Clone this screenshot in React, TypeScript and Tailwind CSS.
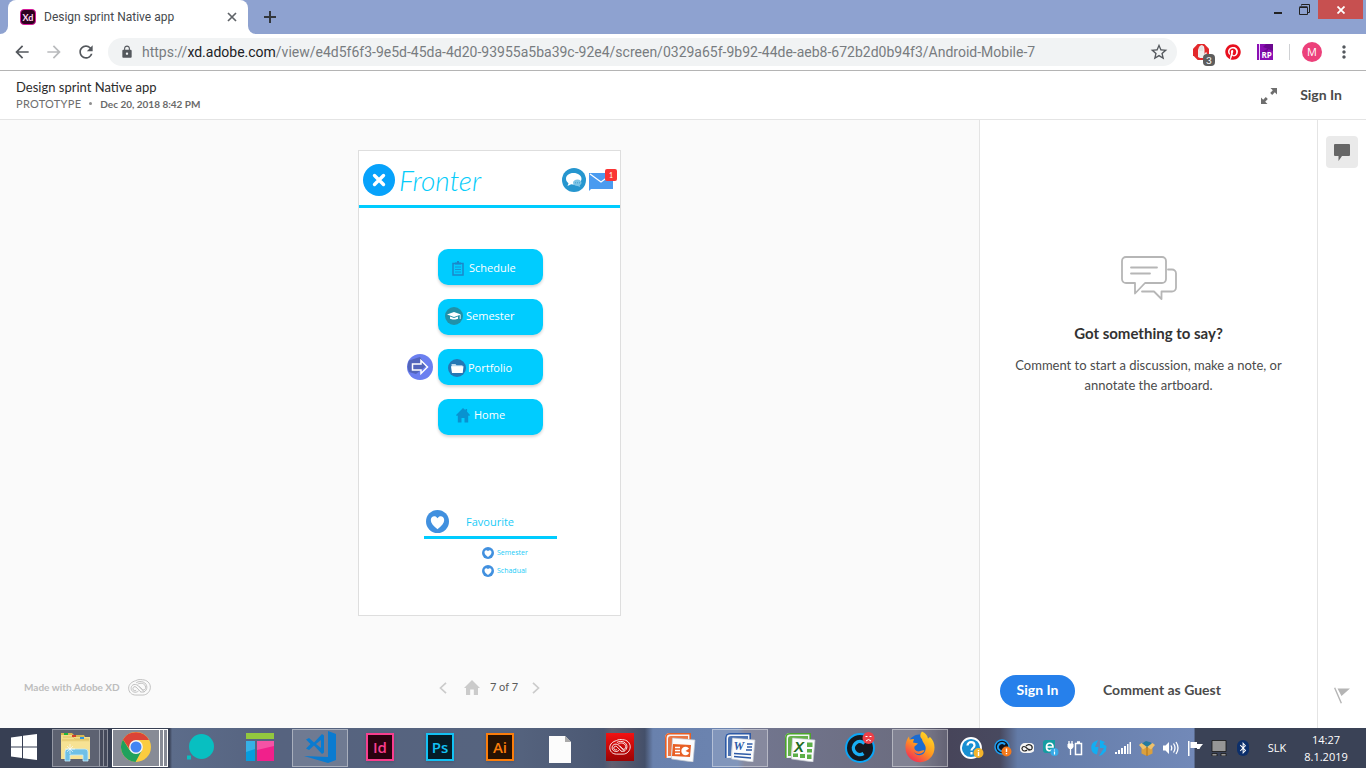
import React from "react";
import { FaPinterest, FaBluetoothB } from "react-icons/fa";
import { MdArrowBack, MdArrowForward, MdRefresh, MdLock, MdStarBorder, MdMoreVert } from "react-icons/md";

type IconProps = { className?: string };

const XdMark = () => (
  <span className="flex size-4 shrink-0 items-center justify-center rounded-sm border border-[#d8199b] bg-[#2e001e] text-[9px] leading-none font-bold text-[#ffd9f2]">
    Xd
  </span>
);

function TitleBar() {
  return (
    <div className="flex h-[34px] items-start bg-[#8ea2d0]">
      <div className="flex h-full w-2 items-end bg-white">
        <div className="h-full w-full rounded-br-lg bg-[#8ea2d0]" />
      </div>
      <div className="flex h-full w-60 items-center rounded-t-lg bg-white pr-2 pl-3">
        <XdMark />
        <span className="ml-2 flex-1 truncate font-[Roboto] text-[12px] text-[#45494d]">Design sprint Native app</span>
        <button aria-label="Close tab" className="flex size-4 items-center justify-center">
          <svg viewBox="0 0 10 10" className="size-[10px]" stroke="#5f6368" strokeWidth="1.7">
            <path d="M1 1l8 8M9 1l-8 8" />
          </svg>
        </button>
      </div>
      <div className="h-full w-2 bg-white">
        <div className="h-full w-full rounded-bl-lg bg-[#8ea2d0]" />
      </div>
      <button aria-label="New tab" className="flex h-[34px] w-7 items-center justify-center">
        <svg viewBox="0 0 12 12" className="size-3" stroke="#33373c" strokeWidth="2">
          <path d="M6 0v12M0 6h12" />
        </svg>
      </button>
      <div className="ml-auto flex items-start">
        <button aria-label="Minimize" className="flex h-[19px] w-6 items-center justify-center">
          <svg viewBox="0 0 8 12" className="h-3 w-2">
            <path d="M0 8h8v2H0z" fill="#222" />
          </svg>
        </button>
        <button aria-label="Restore" className="flex h-[19px] w-7 items-center justify-center">
          <svg viewBox="0 0 11 11" className="size-[11px]" fill="none" stroke="#222">
            <path d="M2.500 1.500v-1h8v8h-1.500" />
            <path d="M.5 3.500h8v7h-8z" />
            <path d="M.5 3h8" strokeWidth="1.500" />
          </svg>
        </button>
        <button aria-label="Close window" className="mr-[3px] flex h-[19px] w-[45px] items-center justify-center bg-[#c75050]">
          <svg viewBox="0 0 8 8" className="size-2" stroke="#fff" strokeWidth="1.8">
            <path d="M.5.5l7 7M7.500.5l-7 7" />
          </svg>
        </button>
      </div>
    </div>
  );
}

function Toolbar() {
  return (
    <div className="flex h-[37px] items-center border-b border-[#b4b4b4] bg-white px-3">
      <button aria-label="Back"><MdArrowBack className="size-5 text-[#54585d]" /></button>
      <button aria-label="Forward" className="ml-3"><MdArrowForward className="size-5 text-[#b9bbbd]" /></button>
      <button aria-label="Reload" className="ml-3"><MdRefresh className="size-5 text-[#54585d]" /></button>
      <div className="ml-3 flex h-7 min-w-0 flex-1 items-center rounded-full bg-[#f1f3f4] pr-2 pl-3">
        <MdLock className="size-[14px] shrink-0 text-[#54585d]" />
        <a href="#" className="ml-2 flex-1 truncate font-[Roboto] text-[14px] text-[#787c80]">
          https://<span className="text-[#202124]">xd.adobe.com</span>/view/e4d5f6f3-9e5d-45da-4d20-93955a5ba39c-92e4/screen/0329a65f-9b92-44de-aeb8-672b2d0b94f3/Android-Mobile-7
        </a>
        <button aria-label="Bookmark"><MdStarBorder className="size-5 text-[#54585d]" /></button>
      </div>
      <button aria-label="Ad blocker" className="relative ml-4 size-4">
        <svg viewBox="0 0 16 16" className="size-4">
          <path d="M4.700 0h6.600L16 4.700v6.600L11.300 16H4.700L0 11.300V4.700z" fill="#e3282b" />
          <path d="M5 13V6l1-3 1.500-1.500L9 1l2 1.500.5 3V10l1.500-2 1 1-3 5H7z" fill="#f0eeee" />
          <path d="M7 7V2.500M9 7V2" stroke="#cfc6c6" strokeWidth=".6" />
        </svg>
        <span className="absolute top-[10px] left-[10px] flex h-3 w-3 items-center justify-center rounded-sm bg-[#5d5d5d] text-[10px] leading-none text-white">3</span>
      </button>
      <button aria-label="Pinterest" className="ml-4"><FaPinterest className="size-4 text-[#e8101f]" /></button>
      <button aria-label="RP extension" className="ml-4">
        <svg viewBox="0 0 16 16" className="size-4">
          <path d="M0 0h16v16H0z" fill="#8a0fb3" />
          <path d="M16 0v7L6 3 9 0zM3 9l9-5-4 7z" fill="#6b078f" />
          <path d="M2.500 0v16" stroke="#f3d8ff" />
          <text x="4.500" y="14" fontSize="8" fontWeight="700" fill="#fff" fontFamily="Open Sans, sans-serif">RP</text>
        </svg>
      </button>
      <div className="ml-4 h-4 w-px bg-[#cfd1d4]" />
      <button aria-label="Profile" className="ml-3 flex size-5 items-center justify-center rounded-full bg-[#ec407a] font-[Open_Sans] text-[11px] text-white">M</button>
      <button aria-label="Menu" className="ml-3"><MdMoreVert className="size-5 text-[#54585d]" /></button>
    </div>
  );
}

function ProjectHeader() {
  return (
    <header className="flex h-[49px] items-center border-b border-[#e4e4e4] bg-white pr-6 pb-px pl-4">
      <div>
        <h1 className="text-[13px] leading-[18px] text-[#2c2c2c]">Design sprint Native app</h1>
        <p className="flex items-center gap-2 text-[11px] leading-[16px] text-[#6e6e6e]">
          <span className="tracking-wide">PROTOTYPE</span>
          <span className="size-[3px] rounded-full bg-[#8e8e8e]" />
          <span className="text-[10px] font-bold text-[#6a6a6a]">Dec 20, 2018 8:42 PM</span>
        </p>
      </div>
      <button aria-label="Full screen" className="ml-auto pt-0.5">
        <svg viewBox="0 0 16 16" className="size-4" fill="#6e6e6e">
          <path d="M9.500 0H16v6.500l-2.200-2.200-2.600 2.600-2-2 2.600-2.600zM6.500 16H0V9.500l2.200 2.200 2.600-2.600 2 2-2.600 2.600z" />
        </svg>
      </button>
      <a href="#" className="ml-[23px] text-[14px] font-bold text-[#4b4b4b]">Sign In</a>
    </header>
  );
}

const HeartBadge = ({ className }: IconProps) => (
  <svg viewBox="0 0 24 24" className={className}>
    <circle cx="12" cy="12" r="12" fill="#4190df" />
    <path d="M12 20C7.500 16.500 5 14 5 10.500 5 6 10 5 12 8.500 14 5 19 6 19 10.500 19 14 16.500 16.500 12 20z" fill="#fff" />
  </svg>
);

const ScheduleIcon = () => (
  <svg viewBox="0 0 12 15" className="h-[15px] w-3">
    <path d="M1 2.500h10v11.500H1z" fill="none" stroke="#1b87c9" strokeWidth="1.500" />
    <path d="M3 1.500h6v2H3zM5 0h2v2H5z" fill="#1b87c9" />
    <path d="M3 6h6M3 8.500h6M3 11h6" stroke="#1b87c9" strokeWidth=".8" />
  </svg>
);

const SemesterIcon = () => (
  <svg viewBox="0 0 18 18" className="size-[18px]">
    <circle cx="9" cy="9" r="9" fill="#2191a8" />
    <path d="M2 7.500L9 5l7 2.500L9 10z" fill="#fff" />
    <path d="M5 9.500v2.300c2 1 6 1 8 0V9.500L9 11z" fill="#fff" />
    <path d="M15.200 8v4" stroke="#fff" strokeWidth=".8" />
  </svg>
);

const PortfolioIcon = () => (
  <svg viewBox="0 0 18 18" className="size-[18px]">
    <circle cx="9" cy="9" r="9" fill="#2477b5" />
    <path d="M3.500 5h4l1 1.300h6V13H4z" fill="#b9d8ee" />
    <path d="M3 7.300h12.500L14.700 14H4z" fill="#fff" />
  </svg>
);

const HomeIcon = () => (
  <svg viewBox="0 0 14 15" className="h-[15px] w-[14px]" fill="#0992d0">
    <path d="M7 0l2.500 2.300V1h1.600v2.800L14 7l-.8 1-1-.6V14.500H8.500V10h-3v4.500H1.800V7.400l-1 .6-.8-1z" />
  </svg>
);

const menu = [
  { label: "Schedule", icon: <ScheduleIcon />, pad: "pl-[14px] gap-[5px] pt-0.5" },
  { label: "Semester", icon: <SemesterIcon />, pad: "pl-[7px] gap-[3px] pb-0.5" },
  { label: "Portfolio", icon: <PortfolioIcon />, pad: "pl-[10px] gap-0.5 pt-0.5" },
  { label: "Home", icon: <HomeIcon />, pad: "pl-[18px] gap-1 pb-1" },
];

function Artboard() {
  return (
    <section className="flex w-[263px] flex-col border border-[#dedede] bg-white pb-[38px]">
      <div className="flex h-[54px] items-center pt-1 pr-[3px] pl-1">
        <button aria-label="Close menu">
          <svg viewBox="0 0 32 32" className="size-8">
            <circle cx="16" cy="16" r="16" fill="#07a2fb" />
            <path d="M11.500 11.500l9 9M20.500 11.500l-9 9" stroke="#fff" strokeWidth="3.400" strokeLinecap="round" />
          </svg>
        </button>
        <span className="ml-1 font-[Lato] text-[28px] leading-8 font-light text-[#06ccfa] italic">Fronter</span>
        <button aria-label="Chat" className="ml-auto">
          <svg viewBox="0 0 24 24" className="size-6">
            <circle cx="12" cy="12" r="12" fill="#2696cf" />
            <path d="M11.500 5C7 5 4 7.500 4 10.800c0 2 1 3.400 2.500 4.400L5.500 18l3.700-1.800c1 .2 1.600.2 2.600.2 4.200 0 7.700-2.500 7.700-5.700S16 5 11.500 5z" fill="#fff" />
            <path d="M15.500 11.500c-2.500 0-4.500 1.400-4.500 3.200S13 18 15.500 18l2.800 1-.6-1.700c1-.6 1.800-1.500 1.800-2.600 0-1.800-1.500-3.200-4-3.200z" fill="#7cc4e6" />
            <path d="M13 14.800h5" stroke="#3f9fd0" strokeDasharray="1 1" />
          </svg>
        </button>
        <button aria-label="Messages" className="relative mt-1 ml-[3px] pr-1">
          <svg viewBox="0 0 24 18" className="h-[18px] w-6">
            <path d="M0 0h24v16H2l-2 2z" fill="#4a9bf0" />
            <path d="M1 1l11 8L23 1" fill="none" stroke="#fff" strokeWidth="1.200" />
          </svg>
          <span className="absolute -top-1 right-0 flex h-3 w-3 items-center justify-center rounded-[2px] bg-[#fa3434] text-[7px] leading-none text-white">1</span>
        </button>
      </div>
      <div className="h-[3px] bg-[#00ccff]" />
      <div className="mt-[41px] flex flex-col gap-[14px] pl-12">
        {menu.map((m) => (
          <div key={m.label} className="flex items-center">
            <span className="w-[31px]">
              {m.label === "Portfolio" && (
                <svg viewBox="0 0 26 26" className="size-[26px]">
                  <circle cx="13" cy="13" r="13" fill="#6b7ff0" />
                  <path d="M2 6.500L13 3l6 9-10 8-7-2a13 13 0 010-11.500z" fill="#5265bb" />
                  <path d="M5.500 10H14V6.500l6.500 6.500L14 19.500V16H5.500z" fill="none" stroke="#fff" strokeWidth="1.500" />
                </svg>
              )}
            </span>
            <button className={`flex h-9 w-[105px] items-center rounded-[10px] bg-[#00ccff] font-[Open_Sans] text-[11px] text-white shadow-[0_2px_3px_rgba(0,0,0,0.16)] ${m.pad}`}>
              {m.icon}
              {m.label}
            </button>
          </div>
        ))}
      </div>
      <div className="mt-[75px] ml-[65px] w-[133px] font-[Open_Sans] text-[#19cbf7]">
        <div className="flex h-[29px] items-center border-b-[3px] border-[#00ccff] pb-1 pl-0.5">
          <HeartBadge className="size-[23px]" />
          <h2 className="ml-[17px] pt-0.5 text-[11px]">Favourite</h2>
        </div>
        <ul className="mt-2 ml-[58px] flex flex-col gap-[6px] text-[7px] leading-3">
          <li className="flex items-center gap-[3px]"><HeartBadge className="size-3" />Semester</li>
          <li className="flex items-center gap-[3px]"><HeartBadge className="size-3" />Schadual</li>
        </ul>
      </div>
    </section>
  );
}

const CreativeCloud = ({ className }: IconProps) => (
  <svg viewBox="0 0 24 18" className={className} fill="none" stroke="currentColor" strokeWidth="1">
    <path d="M8 1.800C10 .5 13 .3 15 .8c5 0 8.500 3.700 8.500 8s-3.500 8.200-8 8.200H8C3.500 17 .5 13.800.5 9.700S4 2.800 8 1.800z" />
    <path d="M17 13.500l-6.500-6.400C8.500 5.500 6.500 5.400 5 6.300c-2.700 1.800-2.400 6 .5 7.300 2.200 1 4.200.2 5.500-1" />
    <path d="M13.500 13.800L8.300 8.500C7 7.600 5 8.200 5 10.300s2.200 2.800 3.500 1.500M8.500 4C11 2.300 14 2.500 16 3.300c5 2 5 8.700.3 10.500H13" />
    <path d="M10 5.500c3-2 8-1 8.500 3.200.2 2-1.500 3.300-3 2.800l-3.800-3.600" />
  </svg>
);

function Canvas() {
  return (
    <main className="flex min-w-0 flex-1 flex-col items-center bg-[#fafafa] pt-[30px] pb-8">
      <Artboard />
      <div className="mt-auto grid w-full grid-cols-[1fr_auto_1fr] items-center px-6">
        <a href="#" className="flex items-center gap-2 text-[10px] font-bold text-[#bdbdbd]">
          Made with Adobe XD
          <CreativeCloud className="h-[17px] w-[23px]" />
        </a>
        <nav className="flex items-center text-[#cbcbcb]">
          <button aria-label="Previous screen">
            <svg viewBox="0 0 8 12" className="h-3 w-2" fill="none" stroke="currentColor" strokeWidth="1.700"><path d="M7 .8L1.500 6 7 11.200" /></svg>
          </button>
          <button aria-label="First screen" className="ml-[17px]">
            <svg viewBox="0 0 16 15" className="h-[15px] w-4" fill="currentColor"><path d="M8 0l8 8h-2v7H9.800V9.500H6.200V15H2V8H0z" /></svg>
          </button>
          <span className="mr-[14px] ml-[10px] text-[11px] text-[#5b5b5b]">7 of 7</span>
          <button aria-label="Next screen">
            <svg viewBox="0 0 8 12" className="h-3 w-2" fill="none" stroke="currentColor" strokeWidth="1.700"><path d="M1 .8L6.500 6 1 11.200" /></svg>
          </button>
        </nav>
      </div>
    </main>
  );
}

function CommentPanel() {
  return (
    <aside className="flex w-[338px] shrink-0 flex-col border-l border-[#e4e4e4] bg-white px-5 pb-[21px]">
      <div className="flex flex-col items-center pt-[136px] text-center">
        <svg viewBox="0 0 56 45" className="h-[45px] w-14" fill="none" stroke="#b6b6b6" strokeWidth="1.800" strokeLinecap="round" strokeLinejoin="round">
          <path d="M5 1h36a4 4 0 014 4v18a4 4 0 01-4 4H24L14 37.500V27H5a4 4 0 01-4-4V5a4 4 0 014-4zM10 11.500h26M10 17.500h19" />
          <path d="M47 13.500h4a4 4 0 014 4v14a4 4 0 01-4 4H40.500V43L33 35.500H21" />
        </svg>
        <h2 className="mt-[22px] text-[15px] leading-5 font-bold text-[#323232]">Got something to say?</h2>
        <p className="mt-3 text-[13px] leading-5 text-[#4b4b4b]">
          Comment to start a discussion, make a note, or annotate the artboard.
        </p>
      </div>
      <div className="mt-auto flex items-center gap-7 text-[14px] leading-4 font-bold">
        <button className="h-8 w-[75px] rounded-full bg-[#2680eb] pb-0.5 text-white">Sign In</button>
        <button className="pb-0.5 text-[#4b4b4b]">Comment as Guest</button>
      </div>
    </aside>
  );
}

function Rail() {
  return (
    <div className="flex w-[49px] shrink-0 flex-col items-center justify-between border-l border-[#e4e4e4] bg-white pt-4 pb-6">
      <button aria-label="Comments" className="flex size-8 items-center justify-center rounded bg-[#eaeaea]">
        <svg viewBox="0 0 16 17" className="h-[17px] w-4" fill="#666"><path d="M1 0h14a1 1 0 011 1v10a1 1 0 01-1 1H8l-3.500 5V12H1a1 1 0 01-1-1V1a1 1 0 011-1z" /></svg>
      </button>
      <button aria-label="Report">
        <svg viewBox="0 0 16 17" className="h-[17px] w-4" fill="#b5b5b5"><path d="M0 1l1.300-.6L8 16l-1.300.6zM3.500 1.500H16L7.500 9z" /></svg>
      </button>
    </div>
  );
}

const ExplorerIcon = () => (
  <svg viewBox="0 0 32 30" className="h-[30px] w-8">
    <path d="M1 1h11l2 2h10l1 2h5v22H1z" fill="#d9b64f" />
    <path d="M1 3h11l1 2h17v22H1z" fill="#f3dd8c" />
    <path d="M1 10h29v17H2z" fill="#f7e294" />
    <path d="M3 5h10l2 2h14M2 8h27" fill="none" stroke="#dcbc59" strokeWidth=".8" />
    <path d="M4 1h4v2H4z" fill="#1fb63a" />
    <path d="M12 3h4v2h-4z" fill="#d5402b" />
    <path d="M20 5h4v2h-4z" fill="#2d95dd" />
    <path d="M5 29V20q0-3 3-3h17q3 0 3 3v9h-5v-6H10v6z" fill="#6fc0e6" stroke="#c8ecfa" strokeWidth=".8" />
    <path d="M10 12v10M5 17h10M7 14l6 6M13 14l-6 6" stroke="#fff" strokeWidth=".6" />
  </svg>
);

const ChromeIcon = () => (
  <svg viewBox="0 0 30 30" className="size-[30px]">
    <circle cx="15" cy="15" r="15" fill="#fbcc3f" />
    <path d="M2 7.500A15 15 0 0014.500 30l6.300-11.500L15 15 8.500 18z" fill="#1fa15d" />
    <path d="M2 7.500A15 15 0 0128 8H15l-6.500 9z" fill="#db4437" />
    <circle cx="15" cy="15" r="6.900" fill="#f5f5f5" />
    <circle cx="15" cy="15" r="5.500" fill="#4285f4" />
  </svg>
);

const BrandTile = ({ text, className }: { text: string; className: string }) => (
  <span className={`flex size-7 items-center justify-center border-2 font-[Open_Sans] text-[15px] leading-none font-semibold shadow ${className}`}>{text}</span>
);

const OfficeIcon = ({ kind }: { kind: "ppt" | "word" | "excel" }) => {
  const color = { ppt: "#e85f24", word: "#2d5aa6", excel: "#4ba52c" }[kind];
  return (
    <svg viewBox="0 0 32 30" className="h-[30px] w-8">
      <path d="M1 26V6q0-5 5-5h21v24z" fill="#f4f5f7" />
      <path d="M1.800 26V6q0-4.200 4.200-4.200h20.200V8" fill="none" stroke={color} strokeWidth="1.600" />
      <path d="M4 24V7q0-3 3-3h17v3H8.500L7 24z" fill={color} opacity=".85" />
      <path d="M8.500 6L31 8l-2 22-21.500-3z" fill="#fbfcfd" stroke="#c0c6cf" strokeWidth=".7" />
      {kind === "ppt" && (
        <g>
          <path d="M9 12l18 1-1 12-18-1z" fill={color} />
          <path d="M11 15.500h5M11 18.500h5M11 21.500h5" stroke="#fff" strokeWidth="1.500" />
          <circle cx="21.500" cy="19" r="4.200" fill="#fff" />
          <path d="M21.500 19l4.500-3v5z" fill={color} />
        </g>
      )}
      {kind === "word" && (
        <g>
          <text x="9.500" y="18" fontSize="12" fontWeight="700" fontStyle="italic" fill={color} fontFamily="Liberation Serif, serif">W</text>
          <path d="M23 12h5.500M23 15h5M22 18h6M10 21.500l17 1M10 24.500l17 1.500" stroke={color} strokeWidth="1.400" />
        </g>
      )}
      {kind === "excel" && (
        <g>
          <path d="M23 10.500h5.500v4.500H23zM23 17h5v3.500h-5zM9 21.500h5V25H9zM16 22h5v4h-5zM23 22.500h4.500V27H23z" fill="#5caf48" />
          <text x="10" y="20" fontSize="15" fontWeight="700" fontStyle="italic" fill="#1d6b24" fontFamily="Liberation Sans, sans-serif">X</text>
        </g>
      )}
    </svg>
  );
};

const FirefoxIcon = () => (
  <svg viewBox="0 0 32 32" className="size-8">
    <defs>
      <linearGradient id="fox" x1=".85" y1="0" x2=".2" y2="1">
        <stop offset="0" stopColor="#ffe226" />
        <stop offset=".5" stopColor="#ff9a1f" />
        <stop offset="1" stopColor="#f0245b" />
      </linearGradient>
    </defs>
    <circle cx="15.500" cy="15" r="11.500" fill="#1b6bd0" />
    <path d="M18 .5c4 2 5.500 4 6 7l2-1.500c3 3 4.500 6 4.500 10.500A14.500 14.500 0 011.500 17C1 13 2.500 8.500 5 5.500l.5 3L10 8l-1 3.500 5 1-3.500 3c-1 3 2.500 6 6 4.500 2-.8 3-1 4-.3-3 4-8 4-10.500 1.300C13 26 20 25 21.500 19c1.300-5-3-7-3.500-11-2.500-2-2-5 0-7.500z" fill="url(#fox)" />
  </svg>
);

const apps: { name: string; icon: React.ReactNode; tile?: string }[] = [
  { name: "File Explorer", icon: <ExplorerIcon />, tile: "explorer" },
  { name: "Chrome", icon: <ChromeIcon />, tile: "chrome" },
  {
    name: "Chat bubble",
    icon: (
      <svg viewBox="0 0 28 26" className="h-[26px] w-7" fill="#08bfc1"><circle cx="15.500" cy="12.500" r="12.500" /><path d="M1 21.500h4v4H1z" /></svg>
    ),
  },
  {
    name: "Layout",
    icon: (
      <svg viewBox="0 0 28 28" className="size-7">
        <path d="M0 0h28v6H0z" fill="#93c83e" /><path d="M0 8h9v20H0z" fill="#069ddd" /><path d="M0 8h9v8l-9 3z" fill="#37b1e6" />
        <path d="M11 8h17v20H11z" fill="#f1208b" /><path d="M11 8h17v5L11 17z" fill="#f453a5" />
      </svg>
    ),
  },
  {
    name: "Code editor",
    tile: "single",
    icon: (
      <svg viewBox="0 0 32 32" className="size-8" fill="#0a7bd0">
        <path d="M24 0l8 3v26l-8 3L0 25l24 1z" />
        <path d="M2 8.500L5 7l5 4.500L18 3l2 1.500v17L18 23l-8-8.500L5 19l-3-1.500L6.500 13zM17 9l-5 4 5 4z" fillRule="evenodd" />
      </svg>
    ),
  },
  { name: "InDesign", icon: <BrandTile text="Id" className="border-[#f83e8e] bg-[#29020f] text-[#f83e8e]" /> },
  { name: "Photoshop", icon: <BrandTile text="Ps" className="border-[#13c1f4] bg-[#051c26] text-[#13c1f4]" /> },
  { name: "Illustrator", icon: <BrandTile text="Ai" className="border-[#fb7d0b] bg-[#261203] text-[#fb7d0b]" /> },
  {
    name: "Document",
    icon: (
      <svg viewBox="0 0 22 27" className="mt-1 h-[27px] w-[22px]"><path d="M0 0h16l6 6v21H0z" fill="#fcfcfc" /><path d="M16 0v6h6z" fill="#aaa" /></svg>
    ),
  },
  {
    name: "Creative Cloud",
    icon: <span className="flex size-7 items-center justify-center bg-linear-to-b from-[#f31212] to-[#9c0404] text-white"><CreativeCloud className="h-4 w-[22px]" /></span>,
  },
  { name: "PowerPoint", icon: <OfficeIcon kind="ppt" /> },
  { name: "Word", icon: <OfficeIcon kind="word" />, tile: "single" },
  { name: "Excel", icon: <OfficeIcon kind="excel" /> },
  {
    name: "Recorder",
    icon: (
      <svg viewBox="0 0 32 32" className="size-8">
        <circle cx="16" cy="17" r="14" fill="#14191f" stroke="#0ca5f5" strokeWidth="2" />
        <path d="M20.500 12.500a6.500 6.500 0 10-1 10" fill="none" stroke="#19b0f5" strokeWidth="3.500" />
        <circle cx="24.500" cy="7" r="6" fill="#ec4048" />
        <path d="M21.500 5.500H23.500M25.500 5.500H27.500M22 10q2.500-3 5 0" fill="none" stroke="#fff" />
      </svg>
    ),
  },
  { name: "Firefox", icon: <FirefoxIcon />, tile: "single" },
];

function AppSlot({ name, icon, tile }: { name: string; icon: React.ReactNode; tile?: string }) {
  const stacked = tile === "explorer" || tile === "chrome";
  const look =
    tile === "chrome"
      ? "border-white bg-[#878b96]"
      : tile === "explorer"
        ? "border-[#9498a4] bg-[#5d6271]"
        : tile === "single"
          ? "border-white/40 bg-white/15"
          : "border-transparent";
  const layer = tile === "chrome" ? "border-white bg-[#878b96]" : "border-[#8b8f9b] bg-[#454a5b]";
  return (
    <button aria-label={name} className="flex h-10 w-[60px] shrink-0 items-center px-0.5">
      <span className={`flex h-[38px] min-w-0 flex-1 items-center justify-center border pb-0.5 ${look}`}>{icon}</span>
      {stacked && <span className={`h-[38px] w-1 shrink-0 border-y border-r ${layer}`} />}
      {stacked && <span className={`h-[38px] w-1 shrink-0 border-y border-r ${layer}`} />}
    </button>
  );
}

const tray: { name: string; icon: React.ReactNode }[] = [
  {
    name: "Recorder alert",
    icon: (
      <svg viewBox="0 0 18 18" className="size-[18px]">
        <circle cx="8" cy="8" r="7" fill="#10151c" stroke="#1d9df0" strokeWidth="1.500" />
        <path d="M11 5.500a4 4 0 10-1 6" fill="none" stroke="#1d9df0" strokeWidth="2" />
        <circle cx="12.500" cy="12.500" r="5" fill="#f47a1c" /><path d="M12.500 9.500v3.500M12.500 14v1.300" stroke="#fff" strokeWidth="1.400" />
      </svg>
    ),
  },
  {
    name: "Creative Cloud",
    icon: (
      <svg viewBox="0 0 14 10" className="h-[10px] w-[14px]">
        <path d="M5 0h5a5 5 0 010 10H4a4 4 0 01-4-5 5 5 0 015-5z" fill="#f4f4f4" />
        <path d="M9.500 7.500L5.500 4C3 2.500 1 5 2.500 7s4 .5 4.500 0M6 3c3-3 7-.5 6 2.500-.8 2-2.700 1.300-3.500.5" fill="none" stroke="#222" strokeWidth="1.200" />
      </svg>
    ),
  },
  {
    name: "Antivirus",
    icon: (
      <svg viewBox="0 0 16 16" className="size-4">
        <path d="M3 0h9v11l-3 2H3q-3 0-3-3V3q0-3 3-3z" fill="#149da2" />
        <path d="M3.500 7H10c0-5-6.500-5-6.500 0s4 4 6 2.500" fill="none" stroke="#fff" strokeWidth="1.700" />
        <circle cx="11.500" cy="12" r="4" fill="#36a9e6" /><path d="M11.500 9.500v1M11.500 11.500v3" stroke="#fff" strokeWidth="1.200" />
      </svg>
    ),
  },
  {
    name: "Power",
    icon: (
      <svg viewBox="0 0 16 16" className="size-4" fill="none" stroke="#fff">
        <path d="M8.500 3.500h6v11h-6zM10 2h3" strokeWidth="1.500" /><path d="M2 1v3M5 1v3M3.500 8v7" strokeWidth="1.300" /><path d="M1 4h5v3L5 8.500H2L1 7z" fill="#fff" />
      </svg>
    ),
  },
  {
    name: "Transfers",
    icon: (
      <svg viewBox="0 0 16 16" className="size-4">
        <path d="M7 0L4 7h3.500L6 14.500A7 7 0 015 1zM9 0l5 2-2 2 3.500 2-.5 5-4 4-3 1 5-8h-4z" fill="#12aef2" />
      </svg>
    ),
  },
  {
    name: "Network",
    icon: (
      <svg viewBox="0 0 16 12" className="h-3 w-4" fill="#fff"><path d="M0 10h2v2H0zM3 8h2v4H3zM6 6h2v6H6zM9 4h2v8H9zM12 2h1.500v10H12zM14.500 0H16v12h-1.500z" /></svg>
    ),
  },
  {
    name: "Package",
    icon: (
      <svg viewBox="0 0 16 16" className="size-4"><path d="M2.500 7h11v6.500L8 16l-5.500-2.500z" fill="#dba03d" /><path d="M3 3.500L7 1l5 1.500 1 2.500-5 3z" fill="#257b9e" /><path d="M0 5l2.500-2L8 7l-4 2.500zM16 5l-2.500-2L8 7l4 2.500z" fill="#efc16a" /><path d="M8 7v9" stroke="#ac711b" /></svg>
    ),
  },
  {
    name: "Volume",
    icon: (
      <svg viewBox="0 0 16 14" className="h-[14px] w-4" fill="none" stroke="#fff" strokeWidth="1.300"><path d="M0 4.500h2.500L6 1v12L2.500 9.500H0z" fill="#fff" stroke="none" /><path d="M8 4.500q1.500 2.500 0 5M10.500 2.500q3 4.500 0 9M13 1q4 6 0 12" /></svg>
    ),
  },
  {
    name: "Action center",
    icon: (
      <svg viewBox="0 0 16 16" className="size-4" fill="#fff"><path d="M1 1h1.500v15H1zM3.500 2H10v2h6l-2.500 3-1 2H10V8H3.500z" /></svg>
    ),
  },
  {
    name: "Touchpad",
    icon: (
      <svg viewBox="0 0 16 16" className="size-4"><path d="M1 .5h14v11H1zM1 13.500h5V16H1zM10 13.500h5V16h-5z" fill="#969696" stroke="#181818" strokeWidth=".8" /></svg>
    ),
  },
  {
    name: "Bluetooth",
    icon: <span className="flex h-4 w-3 items-center justify-center rounded-full bg-[#0c2f6b] text-white"><FaBluetoothB className="size-3" /></span>,
  },
];

function Taskbar() {
  return (
    <footer className="flex h-10 items-center bg-[linear-gradient(90deg,#373f53_0,#373f53_12.4%,#5c6c8a_12.6%,#56637f_20%,#56647f_37%,#4b5873_44.2%,#625f70_44.8%,#44506a_47.2%,#6981ad_47.8%,#6c84b0_54%,#72768f_54.5%,#6b6c7f_67%,#47455a_69.5%,#48495f_73.2%,#637ba7_74.5%,#7289b8_87.400%,#3a4256_87.500%)] font-[Open_Sans] text-white">
      <button aria-label="Start" className="flex h-10 w-[50px] shrink-0 items-center justify-center pr-0.5 pb-0.5">
        <svg viewBox="0 0 26 26" className="size-[26px]" fill="#fff"><path d="M0 3.500L11 2v10.500H0zM12 1.800L26 0v12.500H12zM0 13.500h11V24L0 22.500zM12 13.500h14V26l-14-1.800z" /></svg>
      </button>
      {apps.map((a) => <AppSlot key={a.name} {...a} />)}
      <div className="ml-auto flex items-center">
        <button aria-label="Help" className="mr-[7px] flex w-6 justify-center">
          <svg viewBox="0 0 24 22" className="h-[22px] w-6">
            <circle cx="11" cy="11" r="10" fill="#178fd2" stroke="#fff" strokeWidth="1.800" />
            <path d="M7.500 8.500c0-4.500 7-4.500 7 0 0 2.500-3 2.500-3 5M11.500 15v2.500" fill="none" stroke="#fff" strokeWidth="2.200" />
            <circle cx="18.500" cy="16" r="5" fill="#f4b42a" /><path d="M18.500 13v1.200M18.500 15v4" stroke="#fff" strokeWidth="1.400" />
          </svg>
        </button>
        {tray.map((t, i) => (
          <button key={i} aria-label={t.name} className="flex h-10 w-6 items-center justify-center">{t.icon}</button>
        ))}
        <button className="w-11 text-center text-[11px]">SLK</button>
        <time className="mr-[13px] w-[54px] text-center text-[11px] leading-[17px]">14:27<br />8.1.2019</time>
      </div>
    </footer>
  );
}

export default function App() {
  return (
    <div className="flex min-h-screen flex-col bg-white font-[Lato,sans-serif]">
      <TitleBar />
      <Toolbar />
      <ProjectHeader />
      <div className="flex flex-1 items-stretch">
        <Canvas />
        <CommentPanel />
        <Rail />
      </div>
      <Taskbar />
    </div>
  );
}
